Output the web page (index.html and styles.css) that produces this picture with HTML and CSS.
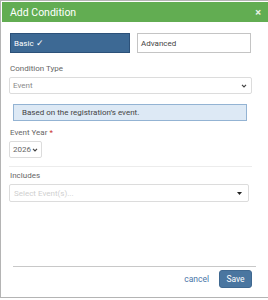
FILE: index.html
```html
<!DOCTYPE html>
<html lang="en">

<head>
    <meta charset="UTF-8">
    <meta name="viewport" content="width=device-width, initial-scale=1.0">
    <title>Add Condition</title>
    <link rel="stylesheet" href="styles.css">
</head>

<body>

    <div class="modal">
        <div class="modal-header">
            <span class="modal-title">Add Condition</span>
            <span class="modal-close">&times;</span>
        </div>

        <div class="modal-body">
            <div class="mode-toggle">
                <button class="mode-btn active">Basic <span class="check">&#10003;</span></button>
                <button class="mode-btn">Advanced</button>
            </div>

            <label class="field-label">Condition Type</label>
            <div class="select wide">
                <span class="select-value">Event</span>
                <svg class="chevron" width="6" height="4" viewBox="0 0 7 5"><path d="M1 1l2.5 2.5L6 1" fill="none" stroke="#444" stroke-width="1.5"/></svg>
            </div>

            <div class="info-box">Based on the registration’s event.</div>

            <label class="field-label">Event Year <span class="required">*</span></label>
            <div class="select year">
                <span class="select-value dark">2026</span>
                <svg class="chevron" width="6" height="4" viewBox="0 0 7 5"><path d="M1 1l2.5 2.5L6 1" fill="none" stroke="#444" stroke-width="1.5"/></svg>
            </div>

            <hr class="divider">

            <label class="field-label">Includes</label>
            <div class="select multi">
                <span class="select-value placeholder">Select Event(s)...</span>
                <svg class="caret" width="5" height="3" viewBox="0 0 5 3"><path d="M0 0h5L2.5 3z" fill="#222"/></svg>
            </div>
        </div>

        <div class="modal-footer">
            <a class="cancel-link" href="#">cancel</a>
            <button class="save-btn">Save</button>
        </div>
    </div>

</body>

</html>
```

FILE: styles.css
```css
body, html {
    font-family: 'Roboto', sans-serif;
    margin: 0;
    padding: 0;
    background-color: #fff;
    overflow: hidden;
}

.modal {
    width: 268px;
    height: 298px;
    box-sizing: border-box;
    border: 1px solid #b4b4b4;
    border-right: none;
    padding: 1px 0 0 1px;
    display: flex;
    flex-direction: column;
}

.modal-header {
    height: 20px;
    background-color: #62ad52;
    color: #fff;
    display: flex;
    align-items: center;
    justify-content: space-between;
    padding: 0 7px 0 8px;
}

.modal-title {
    font-size: 10.5px;
}

.modal-close {
    font-size: 11px;
    font-weight: bold;
    line-height: 1;
    color: #e8f2e4;
}

.modal-body {
    flex-grow: 1;
    padding: 11px 0 0 7px;
    display: flex;
    flex-direction: column;
    align-items: flex-start;
}

.mode-toggle {
    display: flex;
    gap: 7px;
    margin-left: 1px;
}

.mode-btn {
    height: 20px;
    box-sizing: border-box;
    font-family: 'Roboto', sans-serif;
    font-size: 8px;
    text-align: left;
    padding: 0 3px;
    border: 1px solid #c4c4c4;
    background-color: #fff;
    color: #444;
    width: 114px;
}

.mode-btn.active {
    width: 120px;
    background-color: #3d6994;
    border-color: #2c5179;
    color: #fff;
}

.check {
    font-size: 9px;
}

.field-label {
    display: block;
    font-size: 8px;
    line-height: 11px;
    color: #666;
    margin: 10px 0 3px 1px;
}

.required {
    color: #c9302c;
}

.select {
    box-sizing: border-box;
    height: 17px;
    border: 1px solid #dcdcdc;
    border-radius: 2px;
    display: flex;
    align-items: center;
    justify-content: space-between;
    padding: 0 4px 0 3px;
    font-size: 8px;
}

.select.wide {
    width: 243px;
}

.select.year {
    width: 33px;
    height: 17px;
    padding-right: 3px;
}

.select.multi {
    width: 240px;
    height: 18px;
    padding: 0 6px 0 4px;
}

.select-value {
    color: #8a8a8a;
}

.select-value.dark {
    color: #666;
}

.select-value.placeholder {
    color: #cfcfcf;
}

.info-box {
    box-sizing: border-box;
    width: 234px;
    height: 17px;
    margin: 10px 0 0 4px;
    padding-left: 8px;
    background-color: #dde9f5;
    border: 1px solid #93b3d3;
    font-size: 8px;
    line-height: 15px;
    color: #444;
}

.info-box + .field-label {
    margin-top: 6px;
}

.divider {
    width: 243px;
    border: none;
    border-top: 1px solid #ececec;
    margin: 8px 0 0 0;
}

.divider + .field-label {
    margin-top: 3px;
}

.modal-footer {
    margin: 0 12px 0 11px;
    padding: 3px 4px 9px 0;
    border-top: 1px solid #c8c8c8;
    display: flex;
    justify-content: flex-end;
    align-items: center;
    gap: 10px;
}

.cancel-link {
    font-size: 8.5px;
    color: #4a76a8;
    text-decoration: none;
}

.save-btn {
    width: 33px;
    height: 18px;
    font-family: 'Roboto', sans-serif;
    font-size: 8.5px;
    color: #fff;
    background-color: #4a76a0;
    border: 1px solid #3f6890;
    border-radius: 3px;
    padding: 0;
}
```
